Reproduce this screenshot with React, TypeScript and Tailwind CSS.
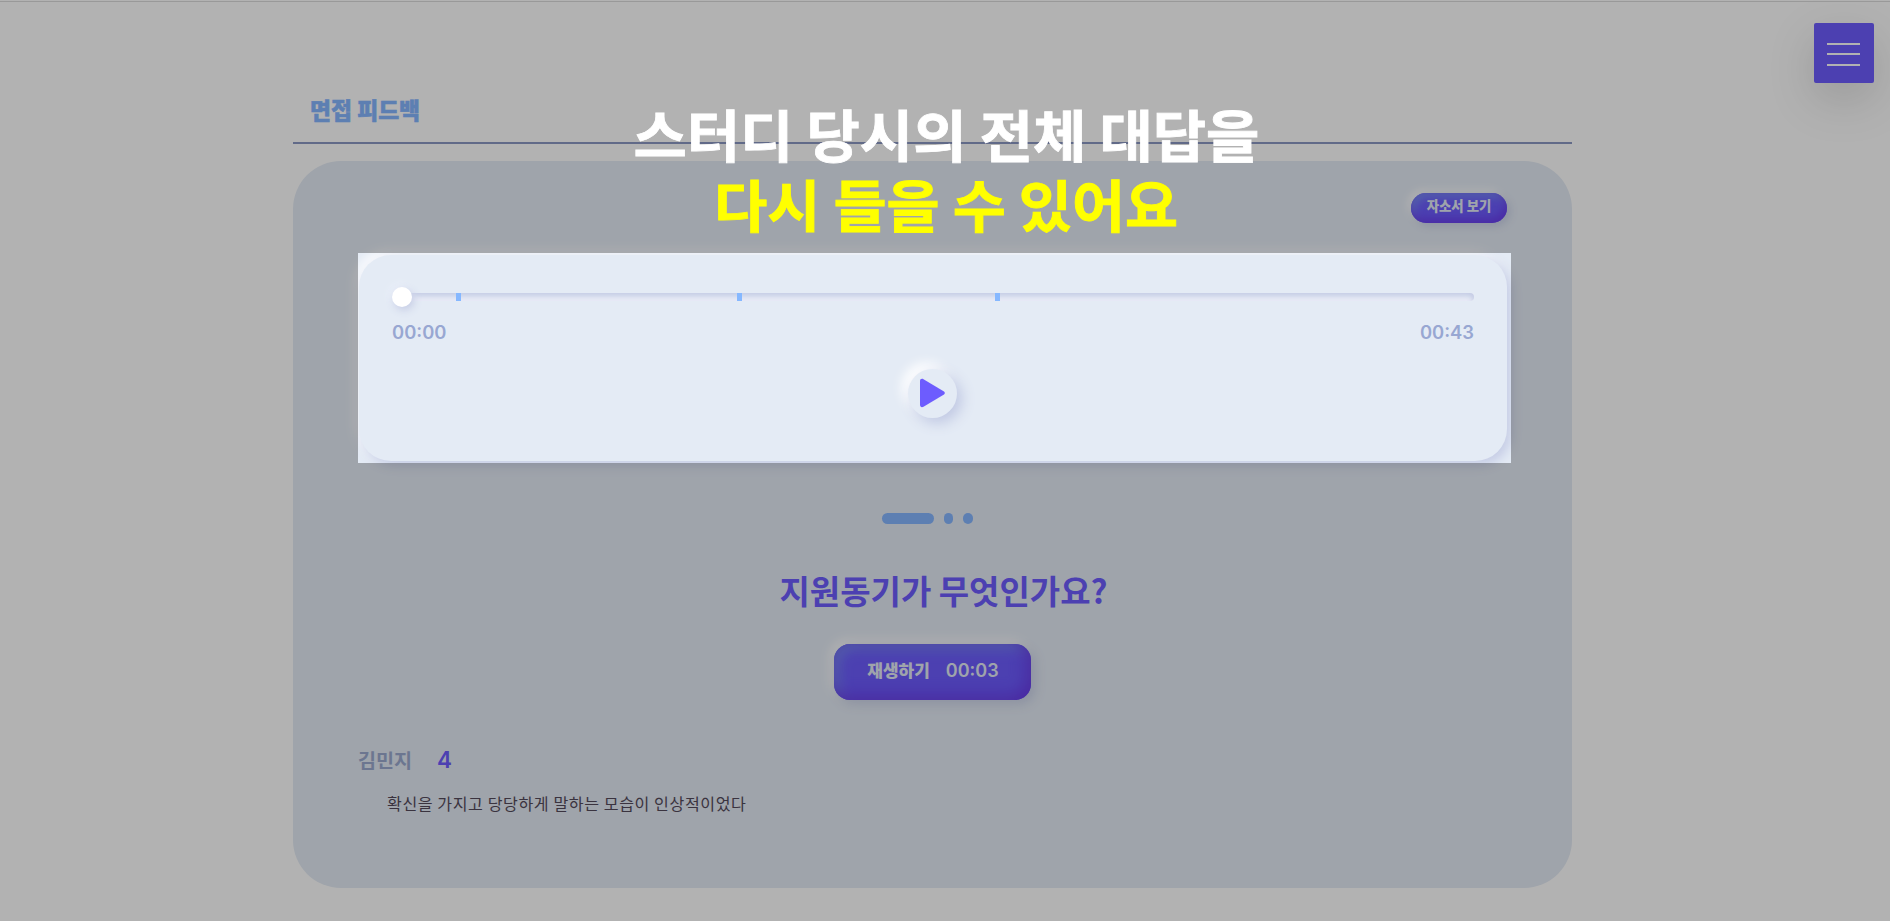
const KR = "font-['Noto_Sans_CJK_KR',sans-serif]";

const markers = [64, 345, 603];

function MenuButton() {
  return (
    <button className="absolute top-[23px] right-[16px] flex h-[60px] w-[60px] flex-col items-center justify-center gap-[8.5px] rounded-[2px] bg-[#6d5cfe] pt-[2px] pr-px shadow-[0_16px_48px_rgba(0,0,0,0.15)]">
      <span className="h-[2px] w-[33px] bg-white" />
      <span className="h-[2px] w-[33px] bg-white" />
      <span className="h-[2px] w-[33px] bg-white" />
    </button>
  );
}

function Player() {
  return (
    <section className="mt-[32px] ml-[66px] flex h-[206px] w-[1148px] flex-col rounded-[32px] bg-[#e4ebf5] px-[33px] shadow-[4px_4px_12px_#c3cae4,-4px_-4px_12px_#ffffff]">
      <div className="relative mt-[38px] h-[8px] w-[1082px] rounded-[4px] shadow-[inset_-2px_4px_5px_-1px_#c5cce5,inset_0_-2px_4px_#e9eaf7]">
        {markers.map((left) => (
          <span key={left} className="absolute top-0 h-[8px] w-[5px] bg-[#86b8ff]" style={{ left }} />
        ))}
        <span className="absolute top-[-6px] left-0 h-[20px] w-[20px] rounded-full bg-white shadow-[2px_3px_8px_#c3cae4,-2px_-2px_8px_#eef2fb]" />
      </div>
      <div className="mt-[19px] flex h-[26px] w-[1082px] items-center justify-between font-['Inter',sans-serif] text-[18.4px] font-semibold text-[#98a7d2]">
        <span>00:00</span>
        <span>00:43</span>
      </div>
      <button className="mt-[23px] ml-[516px] flex h-[49px] w-[49px] items-center justify-center rounded-full bg-[#e4ebf5] shadow-[5px_5px_14px_#c0c8e3,-6px_-6px_12px_#ffffff]">
        <svg className="-mt-px" width="27" height="30" viewBox="0 0 27 30" fill="#6d5cfe">
          <path d="M1 3.2C1 1 2.8 .3 4.5 1.3L24.6 13.2C26.2 14.2 26.2 15.8 24.6 16.8L4.5 28.7C2.8 29.7 1 29 1 26.8Z" />
        </svg>
      </button>
    </section>
  );
}

export default function App() {
  return (
    <div className={`relative h-[921px] w-[1890px] overflow-hidden bg-white pt-px ${KR}`}>
      <div className="h-px bg-[#dcdcdc]" />
      <MenuButton />
      <main className="ml-[293px] w-[1279px]">
        <header className="flex h-[142px] items-end border-b-[2px] border-[#8b99c3] pb-[16px] pl-[17px]">
          <h1 className="text-[22.8px] leading-[32px] font-black whitespace-nowrap text-[#86b6ff] [-webkit-text-stroke:0.5px_#86b6ff]">면접 피드백</h1>
        </header>
        <article className="mt-[17px] flex h-[727px] flex-col rounded-[48px] bg-[#e4ebf5]">
          <div className="flex justify-end pt-[32px] pr-[65px]">
            <button className="flex h-[30px] w-[96px] items-center justify-center rounded-full bg-[#6d5cfe] pb-[6px] text-[13.4px] leading-[20px] font-black whitespace-nowrap text-[#e4ebf5] shadow-[inset_-2px_-4px_8px_#6a3cec,inset_3px_4px_8px_#7a90f4,3px_3px_8px_#c8d0e7,-3px_-3px_8px_#ffffff]">
              자소서 보기
            </button>
          </div>
          <Player />
          <div className="mt-[52px] ml-[589px] flex h-[11px] gap-[10px]">
            <span className="w-[52px] rounded-full bg-[#86b6ff]" />
            <span className="w-[9px] rounded-full bg-[#86b6ff]" />
            <span className="w-[10px] rounded-full bg-[#86b6ff]" />
          </div>
          <h2 className="mt-[42px] ml-[22px] h-[50px] text-center text-[33px] leading-[48px] font-bold whitespace-nowrap text-[#6d5cfe]">
            지원동기가 무엇인가요?
          </h2>
          <button className="mt-[28px] ml-[541px] flex h-[56px] w-[197px] items-center justify-center gap-[16px] rounded-[16px] bg-[#6d5cfe] pb-[3px] pl-px text-[#e4ebf5] shadow-[inset_-4px_-4px_16px_#6836e6,inset_4px_4px_14px_#7a98f4,4px_4px_12px_#c8d0e7,-4px_-4px_12px_#ffffff]">
            <span className="-mt-[2px] text-[17px] leading-[24px] font-black whitespace-nowrap">재생하기</span>
            <span className="font-['Inter',sans-serif] text-[18px] leading-[24px] font-semibold">00:03</span>
          </button>
          <div className="mt-[46px] ml-[65px] flex h-[28px] items-center gap-[25px]">
            <span className="text-[19.6px] leading-[28px] font-bold whitespace-nowrap text-[#9baacf]">김민지</span>
            <span className="font-['Inter',sans-serif] text-[22.5px] leading-[28px] font-semibold text-[#6d5cfe]">4</span>
          </div>
          <p className="mt-[17px] ml-[94px] text-[16.1px] leading-[24px] tracking-[0.58px] whitespace-nowrap text-[#544a5b]">
            확신을 가지고 당당하게 말하는 모습이 인상적이었다
          </p>
        </article>
      </main>

      <div className="pointer-events-none absolute top-[253px] left-[358px] h-[210px] w-[1153px] shadow-[0_0_0_2000px_rgba(0,0,0,0.3)]" />
      <div className="absolute top-[98px] left-[546px] flex w-[800px] flex-col items-center text-[56px] leading-[70px] font-bold whitespace-nowrap">
        <p className="scale-x-[1.035] text-white [-webkit-text-stroke:0.8px_#ffffff]">스터디 당시의 전체 대답을</p>
        <p className="scale-x-[1.03] text-[#ffff00] [-webkit-text-stroke:0.8px_#ffff00]">다시 들을 수 있어요</p>
      </div>
    </div>
  );
}
